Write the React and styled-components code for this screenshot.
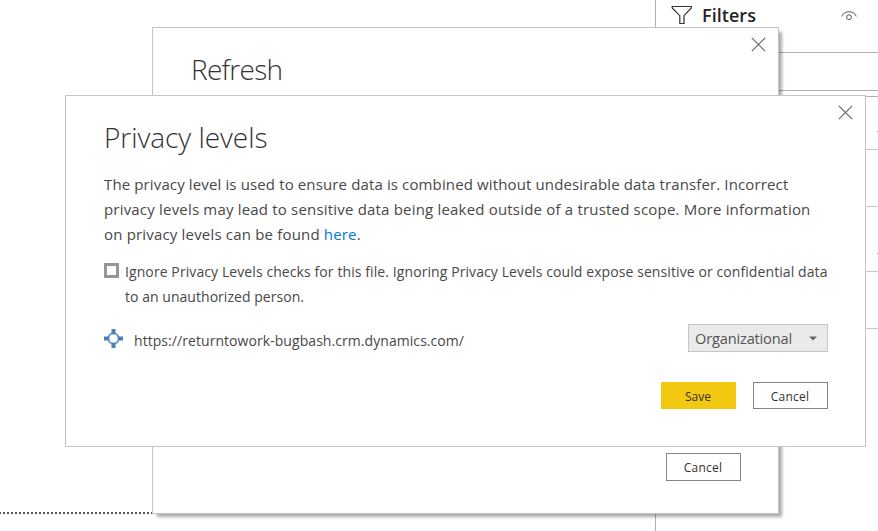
import React from "react";
import styled, { createGlobalStyle } from "styled-components";

const GlobalStyle = createGlobalStyle`
  * { box-sizing: border-box; }
  body { margin: 0; background: #fff; overflow: hidden; }
`;

const Page = styled.main`
  position: relative;
  display: flex;
  width: 878px;
  height: 531px;
  overflow: hidden;
  background: #fff;
  color: #484848;
  font-family: "Open Sans", "Noto Sans", sans-serif;
`;

const ReportArea = styled.section`
  width: 655px;
  padding-top: 512px;
`;

const CanvasEdge = styled.div`
  width: 153px;
  height: 2px;
  background: repeating-linear-gradient(90deg, #595959 0 1px, transparent 1px 3px, #595959 3px 4px);
`;

const FilterPane = styled.aside`
  flex: 1;
  border-left: 1px solid #b3b0ad;
`;

const PaneHeader = styled.header`
  display: flex;
  align-items: center;
  height: 30px;
  padding: 0 21px 0 15px;
  svg:last-child { margin-top: 2px; }
`;

const PaneTitle = styled.h2`
  flex: 1;
  margin: 0 0 0 9px;
  color: #252423;
  font-size: 18px;
  font-weight: 600;
  line-height: 24px;
  letter-spacing: ${(p) => p.$tracking}px;
`;

const SearchRow = styled.div`
  height: 39px;
  margin-top: 22px;
  border: solid #b3b0ad;
  border-width: 1px 0;
`;

const FilterList = styled.div`
  margin-top: 5px;
  border-top: 1px solid #b3b0ad;
`;

const FilterCard = styled.div`
  display: flex;
  justify-content: flex-end;
  height: ${(p) => p.$height}px;
  padding-top: ${(p) => p.$markTop || 0}px;
  border-bottom: 1px solid #c8c6c4;
`;

const CardMark = styled.span`
  width: 1px;
  height: 1px;
  background: #8a8886;
`;

const Dialog = styled.section`
  position: absolute;
  left: ${(p) => p.$left}px;
  top: ${(p) => p.$top}px;
  display: flex;
  flex-direction: column;
  width: ${(p) => p.$width}px;
  height: ${(p) => p.$height}px;
  padding: 22px 37px 0 38px;
  border: 1px solid #c4c4c4;
  background: #fff;
  box-shadow: ${(p) => (p.$raised ? "4px 4px 3px -1px rgba(0, 0, 0, 0.33)" : "none")};
`;

const CloseButton = styled.button`
  position: absolute;
  top: 9px;
  right: 12px;
  width: 15px;
  height: 15px;
  padding: 0;
  border: 0;
  background: none;
  svg { display: block; }
`;

const DialogTitle = styled.h1`
  margin: 0;
  color: #333;
  font-size: 28px;
  font-weight: 300;
  line-height: 38px;
  letter-spacing: ${(p) => p.$tracking}px;
`;

const Paragraph = styled.p`
  margin: 16px 0 0;
  font-size: 15px;
  line-height: 25px;
`;

const TextLine = styled.span`
  display: block;
  white-space: nowrap;
  letter-spacing: ${(p) => p.$tracking}px;
`;

const Link = styled.a`
  color: #0078d4;
  text-decoration: none;
`;

const CheckRow = styled.label`
  display: flex;
  gap: 6px;
  margin-top: 12px;
  font-size: 14px;
  line-height: 25px;
`;

const CheckBox = styled.span`
  flex: none;
  width: 15px;
  height: 15px;
  margin-top: 4px;
  border: 3px solid #969696;
  background: #fff;
`;

const SourceRow = styled.div`
  display: flex;
  justify-content: space-between;
  height: 28px;
  margin-top: 15px;
`;

const Source = styled.div`
  display: flex;
  gap: 11px;
  padding-top: 4px;
  font-size: 14px;
  line-height: 25px;
  svg { margin-top: 1px; }
`;

const Select = styled.button`
  display: flex;
  align-items: center;
  justify-content: space-between;
  width: 140px;
  height: 28px;
  padding: 0 10px 0 6px;
  border: 1px solid #c4c4c4;
  background: #eaeaea;
  color: #555;
  font: 14.6px "Open Sans", "Noto Sans", sans-serif;
  letter-spacing: ${(p) => p.$tracking}px;
`;

const Actions = styled.footer`
  display: flex;
  justify-content: flex-end;
  gap: 17px;
  margin-top: ${(p) => p.$offset};
`;

const Button = styled.button`
  width: 75px;
  height: ${(p) => p.$height || 27}px;
  padding: 1px 1px 0 0;
  border: 1px solid ${(p) => (p.$primary ? "#f2c811" : "#848484")};
  background: ${(p) => (p.$primary ? "#f2c811" : "#fff")};
  color: #333;
  font: 12px "Open Sans", "Noto Sans", sans-serif;
  letter-spacing: ${(p) => p.$tracking}px;
`;

const FunnelIcon = () => (
  <svg width="22" height="20" viewBox="0 0 22 20" fill="none" stroke="#333" strokeWidth="1.2">
    <path d="M1.2 1.5H20.3V3L13 10.7V18.5H8.8V10.7L1.2 3Z" />
  </svg>
);

const EyeIcon = () => (
  <svg width="16" height="12" viewBox="0 0 16 12" fill="none" stroke="#555" strokeWidth="1">
    <path d="M.8 6.4C2.5 .2 13.5 .2 15.2 6.4" />
    <circle cx="8" cy="7.2" r="2.4" />
  </svg>
);

const CloseIcon = () => (
  <svg width="15" height="15" viewBox="0 0 15 15" stroke="#666" strokeWidth="1.2">
    <path d="M.8 .8 14.2 14.2M14.2 .8 .8 14.2" />
  </svg>
);

const SourceIcon = () => (
  <svg width="19" height="19" viewBox="0 0 19 19" fill="none">
    <circle cx="9.5" cy="9.5" r="5.1" fill="#fff" stroke="#7ba3d0" strokeWidth="2.2" />
    <path d="M9.5 0V5M9.5 14V19M0 9.5H5M14 9.5H19" stroke="#4a80b8" strokeWidth="4" />
  </svg>
);

const CaretIcon = () => (
  <svg width="8" height="5" viewBox="0 0 8 5" fill="#666">
    <path d="M0 .5H8L4 4.5Z" />
  </svg>
);

export default function App() {
  return (
    <>
      <GlobalStyle />
      <Page>
        <ReportArea>
          <CanvasEdge />
        </ReportArea>
        <FilterPane>
          <PaneHeader>
            <FunnelIcon />
            <PaneTitle $tracking={0.04}>Filters</PaneTitle>
            <EyeIcon />
          </PaneHeader>
          <SearchRow />
          <FilterList>
            <FilterCard $height={53} $markTop={34}><CardMark /></FilterCard>
            <FilterCard $height={57} />
            <FilterCard $height={65} $markTop={46}><CardMark /></FilterCard>
            <FilterCard $height={57} />
          </FilterList>
        </FilterPane>

        <Dialog $left={152} $top={27} $width={627} $height={487} $raised>
          <CloseButton aria-label="Close"><CloseIcon /></CloseButton>
          <DialogTitle $tracking={-0.7}>Refresh</DialogTitle>
          <Actions $offset="365px">
            <Button $height={28} $tracking={0.2}>Cancel</Button>
          </Actions>
        </Dialog>

        <Dialog $left={65} $top={95} $width={801} $height={352}>
          <CloseButton aria-label="Close"><CloseIcon /></CloseButton>
          <DialogTitle $tracking={-0.04}>Privacy levels</DialogTitle>
          <Paragraph>
            <TextLine $tracking={0.13}>The privacy level is used to ensure data is combined without undesirable data transfer. Incorrect</TextLine>
            <TextLine $tracking={0.19}>privacy levels may lead to sensitive data being leaked outside of a trusted scope. More information</TextLine>
            <TextLine $tracking={0.18}>on privacy levels can be found <Link>here</Link>.</TextLine>
          </Paragraph>
          <CheckRow>
            <CheckBox />
            <span>
              <TextLine $tracking={0.09}>Ignore Privacy Levels checks for this file. Ignoring Privacy Levels could expose sensitive or confidential data</TextLine>
              <TextLine $tracking={0.04}>to an unauthorized person.</TextLine>
            </span>
          </CheckRow>
          <SourceRow>
            <Source>
              <SourceIcon />
              <TextLine $tracking={0.06}>https://returntowork-bugbash.crm.dynamics.com/</TextLine>
            </Source>
            <Select $tracking={-0.17}>Organizational<CaretIcon /></Select>
          </SourceRow>
          <Actions $offset="30px">
            <Button $primary $tracking={0}>Save</Button>
            <Button $tracking={0.2}>Cancel</Button>
          </Actions>
        </Dialog>
      </Page>
    </>
  );
}
